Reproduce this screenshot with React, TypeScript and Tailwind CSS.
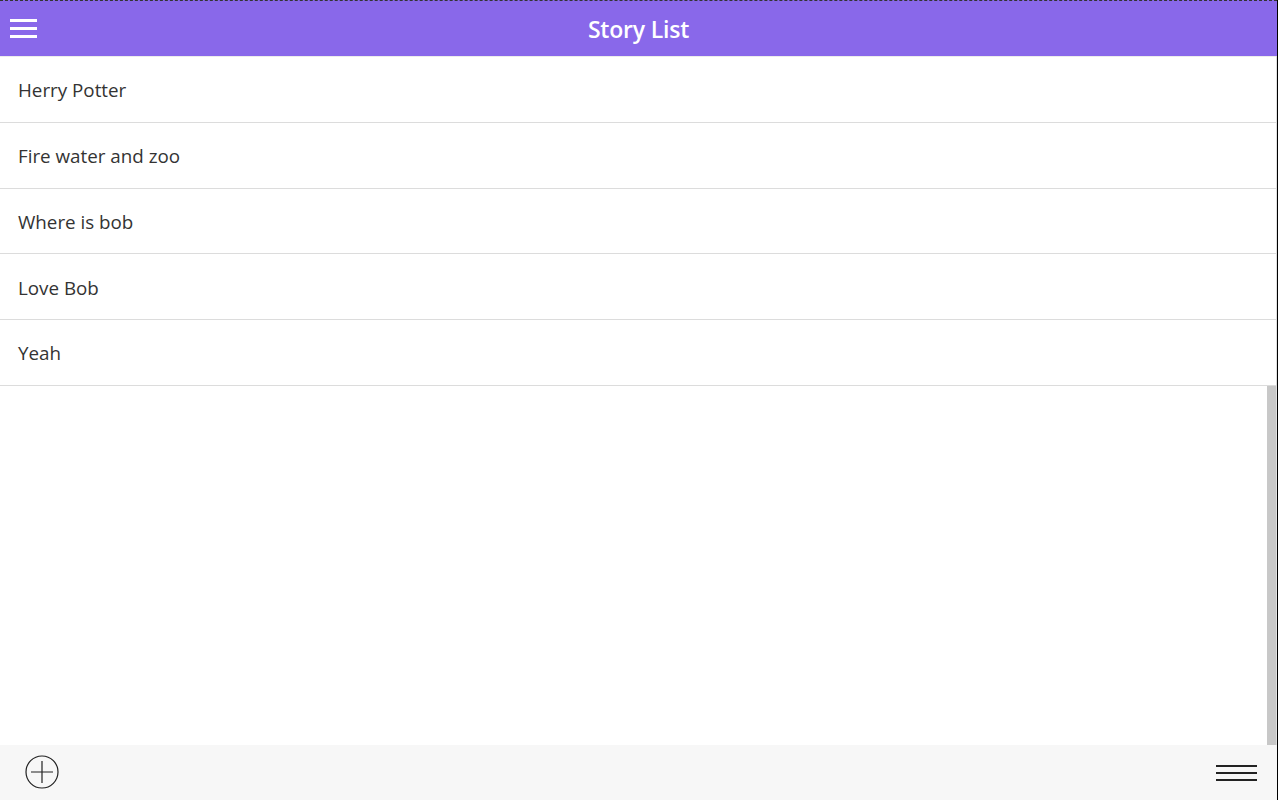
const stories = ['Herry Potter', 'Fire water and zoo', 'Where is bob', 'Love Bob', 'Yeah'];

export default function App() {
    return (
        <div
            className="flex h-[800px] w-[1278px] flex-col overflow-hidden border-r border-black bg-white"
            style={{ fontFamily: '"Open Sans", "Noto Sans", sans-serif' }}
        >
            <header className="relative flex h-[56px] shrink-0 items-center justify-center border-t border-dashed border-[#333] bg-[#8968ea] pt-[2px]">
                <button type="button" className="absolute left-[10px] top-[18px] flex w-[27px] flex-col gap-[5px]">
                    <span className="h-[3px] w-full bg-white" />
                    <span className="h-[3px] w-full bg-white" />
                    <span className="h-[3px] w-full bg-white" />
                </button>
                <h1 className="text-[23px] font-semibold tracking-[-0.2px] text-white">Story List</h1>
            </header>

            <div className="flex flex-1 flex-col border-r border-[#e0e0e0]">
                <ul className="border-t border-[#ececec]">
                    {stories.map((story) => (
                        <li
                            key={story}
                            className="flex h-[65.75px] items-center border-b border-[#dcdcdc] pl-[18px] pt-[2px] text-[18.8px] text-[#333]"
                        >
                            {story}
                        </li>
                    ))}
                </ul>
                <div className="flex flex-1 justify-end">
                    <div className="w-[9px] bg-[#c8c8c8]" />
                </div>
            </div>

            <footer className="flex h-[55px] shrink-0 items-center justify-between bg-[#f7f7f7] pl-[25px] pr-[20px]">
                <button type="button" className="mt-[-1px]">
                    <svg width="34" height="34" viewBox="0 0 34 34" fill="none" stroke="#222" strokeWidth="1.2">
                        <circle cx="17" cy="17" r="16" />
                        <path d="M17 6v22M6 17h22" />
                    </svg>
                </button>
                <button type="button" className="flex w-[41px] flex-col gap-[5px]">
                    <span className="h-[2px] w-full bg-[#222]" />
                    <span className="h-[2px] w-full bg-[#222]" />
                    <span className="h-[2px] w-full bg-[#222]" />
                </button>
            </footer>
        </div>
    );
}
